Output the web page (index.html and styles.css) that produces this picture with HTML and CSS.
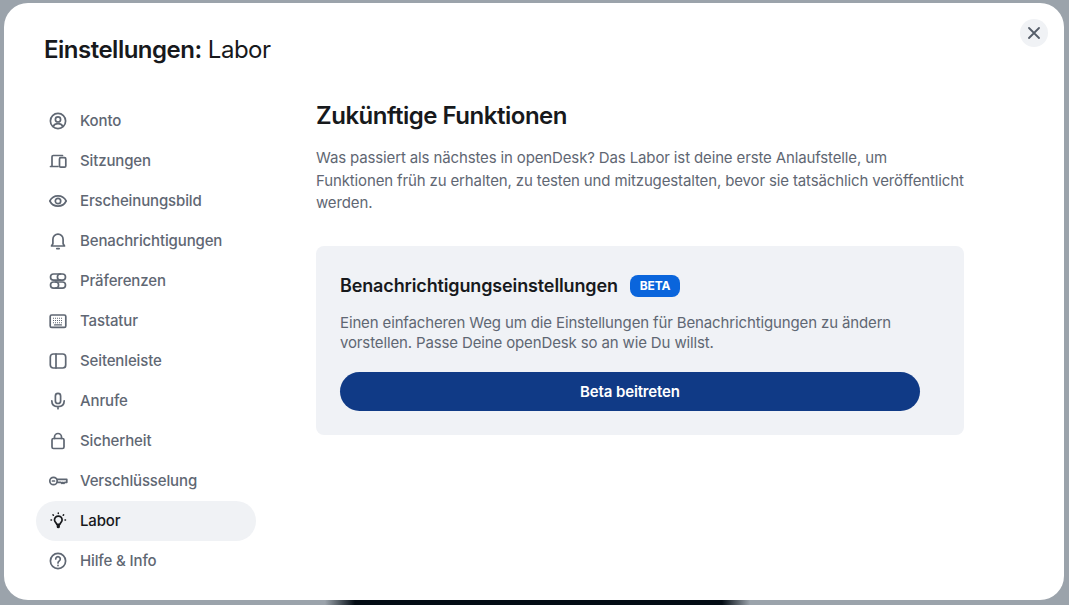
FILE: index.html
```html
<!DOCTYPE html>
<html lang="de">
	<head>
		<meta charset="utf-8">
		<title>Einstellungen: Labor</title>
		<link rel="stylesheet" href="styles.css">
	</head>
	<body>
		<div class="dialog">
			<button class="close" aria-label="Schließen">
				<svg width="12" height="12" viewBox="0 0 12 12"><path d="M1 1l10 10M11 1L1 11"/></svg>
			</button>
			<h1 class="title"><b>Einstellungen:</b> Labor</h1>
			<div class="main">
				<ul class="menu">
					<li>
						<svg viewBox="0 0 20 20"><circle cx="10" cy="10" r="7.600"/><circle cx="10" cy="8.400" r="2.600"/><path d="M5.200 15.400c1-2 2.800-2.800 4.800-2.800s3.800.8 4.800 2.800"/></svg>
						Konto
					</li>
					<li>
						<svg viewBox="0 0 20 20"><path d="M4 15V5.800q0-1.300 1.300-1.300h9.200"/><path d="M2.500 15.500h7.500"/><rect x="11.500" y="6.600" width="6.300" height="9.600" rx="1.300"/></svg>
						Sitzungen
					</li>
					<li>
						<svg viewBox="0 0 20 20"><path d="M1.800 10C3.500 6.600 6.500 4.900 10 4.900s6.500 1.700 8.200 5.100c-1.700 3.400-4.700 5.100-8.200 5.100S3.500 13.400 1.800 10z"/><circle cx="10" cy="10" r="2.700"/></svg>
						Erscheinungsbild
					</li>
					<li>
						<svg viewBox="0 0 20 20"><path d="M3.500 15h13l-1.400-2.300V8.300a5.100 5.100 0 0 0-10.200 0v4.400z"/><path d="M8.800 17.600h2.400"/></svg>
						Benachrichtigungen
					</li>
					<li>
						<svg viewBox="0 0 20 20"><rect x="2.500" y="3" width="15" height="6.200" rx="3.100"/><rect x="2.500" y="11" width="15" height="6.200" rx="3.100"/><path d="M12.500 3a3.100 3.100 0 0 0 0 6.200M7.500 11a3.100 3.100 0 0 1 0 6.200"/></svg>
						Präferenzen
					</li>
					<li>
						<svg viewBox="0 0 20 20"><rect x="2.200" y="4" width="15.600" height="12.400" rx="1.500"/><path class="keys" d="M5 7.300h10M5 9.500h10M5 11.700h10"/><path class="bar" d="M6.500 13.900h7"/></svg>
						Tastatur
					</li>
					<li>
						<svg viewBox="0 0 20 20"><rect x="2.300" y="3" width="15.400" height="14" rx="3"/><path d="M8 3v14"/></svg>
						Seitenleiste
					</li>
					<li>
						<svg viewBox="0 0 20 20"><rect x="7.400" y="2.300" width="5.200" height="10.200" rx="2.600"/><path d="M3.800 9.800c0 3.800 2.600 5.900 6.200 5.900s6.200-2.100 6.200-5.900M10 15.700v2"/></svg>
						Anrufe
					</li>
					<li>
						<svg viewBox="0 0 20 20"><rect x="4" y="7.500" width="12" height="10" rx="1.500"/><path d="M6.500 7.500V6a3.500 3.500 0 0 1 7 0v1.500"/></svg>
						Sicherheit
					</li>
					<li>
						<svg viewBox="0 0 20 20"><circle cx="5.500" cy="10" r="3.700"/><path d="M4.500 10h2"/><path d="M9.200 8.400h9.600v2.900h-1.900l-1 1-1-1-1 1-1-1H9.200"/></svg>
						Verschlüsselung
					</li>
					<li class="active">
						<svg class="bulb" viewBox="0 0 20 20"><path d="M8.700 13.300c0-1.500-2.200-2.100-2.200-4.400a3.800 3.800 0 0 1 7.600 0c0 2.300-2.200 2.900-2.200 4.400z"/><path class="base" d="M8.700 13.500h3.200v2.300q0 1.500-1.600 1.500t-1.600-1.500z"/><path class="rays" d="M10.300 2v.5M5 3.900l.4.400M15.600 3.900l-.4.400M3 9h.5M17 9h.5"/></svg>
						Labor
					</li>
					<li>
						<svg viewBox="0 0 20 20"><circle cx="10" cy="10" r="7.600"/><path d="M7.700 8a2.300 2.300 0 1 1 3.600 1.900c-.9.600-1.300 1-1.300 2"/><path d="M10 14.300v.3"/></svg>
						Hilfe &amp; Info
					</li>
				</ul>
				<div class="content">
					<h2>Zukünftige Funktionen</h2>
					<p class="intro">Was passiert als nächstes in openDesk? Das Labor ist deine erste Anlaufstelle, um Funktionen früh zu erhalten, zu testen und mitzugestalten, bevor sie tatsächlich veröffentlicht werden.</p>
					<div class="card">
						<div class="card_head">
							<h3>Benachrichtigungseinstellungen</h3>
							<span class="badge">BETA</span>
						</div>
						<p>Einen einfacheren Weg um die Einstellungen für Benachrichtigungen zu ändern vorstellen. Passe Deine openDesk so an wie Du willst.</p>
						<button class="join">Beta beitreten</button>
					</div>
				</div>
			</div>
		</div>
	</body>
</html>
```

FILE: styles.css
```css
*{
	margin: 0;
	padding: 0;
	box-sizing: border-box;
}
html,body{
	height: 100%;
	overflow: hidden;
}
body{
	padding: 3px 5px 5px 4px;
	background: #9ba3ab linear-gradient(90deg, #9ba3ab 0, #9ba3ab 325px, #030c14 355px, #030c14 722px, #9ba3ab 750px) no-repeat bottom / 100% 5px;
	font-family: Inter, "Noto Sans", sans-serif;
	letter-spacing: -0.135px;
	color: #17191c;
}
.dialog{
	position: relative;
	height: 597px;
	padding: 31px 100px 0 32px;
	background: #fff;
	border-radius: 24px;
}
.close{
	position: absolute;
	top: 16px;
	right: 16px;
	width: 28px;
	height: 28px;
	display: flex;
	align-items: center;
	justify-content: center;
	border: 0;
	border-radius: 50%;
	background: #f0f2f5;
}
.close path{
	fill: none;
	stroke: #555d69;
	stroke-width: 1.800;
	stroke-linecap: round;
}
.title{
	margin-left: 8px;
	font-size: 24px;
	line-height: 32px;
	font-weight: 400;
	letter-spacing: -0.5px;
}
.title b{
	font-weight: 600;
}
.main{
	display: flex;
	margin-top: 35px;
}
.menu{
	width: 220px;
	flex: none;
	list-style: none;
}
.menu li{
	height: 40px;
	padding: 0 0 1px 12px;
	display: flex;
	align-items: center;
	gap: 12px;
	border-radius: 20px;
	font-size: 15px;
	font-weight: 500;
	color: #5f6773;
}
.menu li svg{
	width: 20px;
	height: 20px;
	margin-top: 1px;
	flex: none;
	fill: none;
	stroke: currentColor;
	stroke-width: 1.7;
	stroke-linecap: round;
	stroke-linejoin: round;
}
.menu li svg .keys{
	stroke-width: 1.100;
	stroke-linecap: butt;
	stroke-dasharray: 1 1;
}
.menu li svg .bar{
	stroke-width: 1.200;
}
.menu li svg.bulb .base{
	fill: currentColor;
	stroke: none;
}
.menu li svg.bulb .rays{
	stroke-width: 1.500;
}
.menu li.active{
	background: #f0f2f5;
	color: #17191c;
}
.content{
	margin-left: 60px;
	margin-top: -1px;
	flex: 1;
}
.content h2{
	font-size: 24px;
	line-height: 32px;
	font-weight: 600;
	letter-spacing: -0.48px;
}
.intro{
	margin-top: 15px;
	font-size: 15px;
	line-height: 22.5px;
	color: #5f6773;
}
.card{
	margin-top: 31px;
	height: 189px;
	padding: 26px 24px 0;
	background: #f0f2f6;
	border-radius: 8px;
}
.card_head{
	display: flex;
	align-items: center;
	gap: 12px;
}
.card_head h3{
	font-size: 18px;
	line-height: 28px;
	font-weight: 600;
}
.badge{
	padding: 0 10px;
	height: 22px;
	line-height: 22px;
	background: #0a65dc;
	border-radius: 8px;
	font-size: 12px;
	font-weight: 700;
	color: #fff;
}
.card p{
	margin-top: 13px;
	width: 580px;
	font-size: 15px;
	line-height: 20px;
	color: #5f6773;
}
.join{
	display: block;
	margin-top: 19px;
	width: 580px;
	height: 39px;
	border: 0;
	border-radius: 20px;
	background: #103a86;
	font-family: inherit;
	font-size: 15px;
	font-weight: 600;
	letter-spacing: inherit;
	color: #fff;
}
```
